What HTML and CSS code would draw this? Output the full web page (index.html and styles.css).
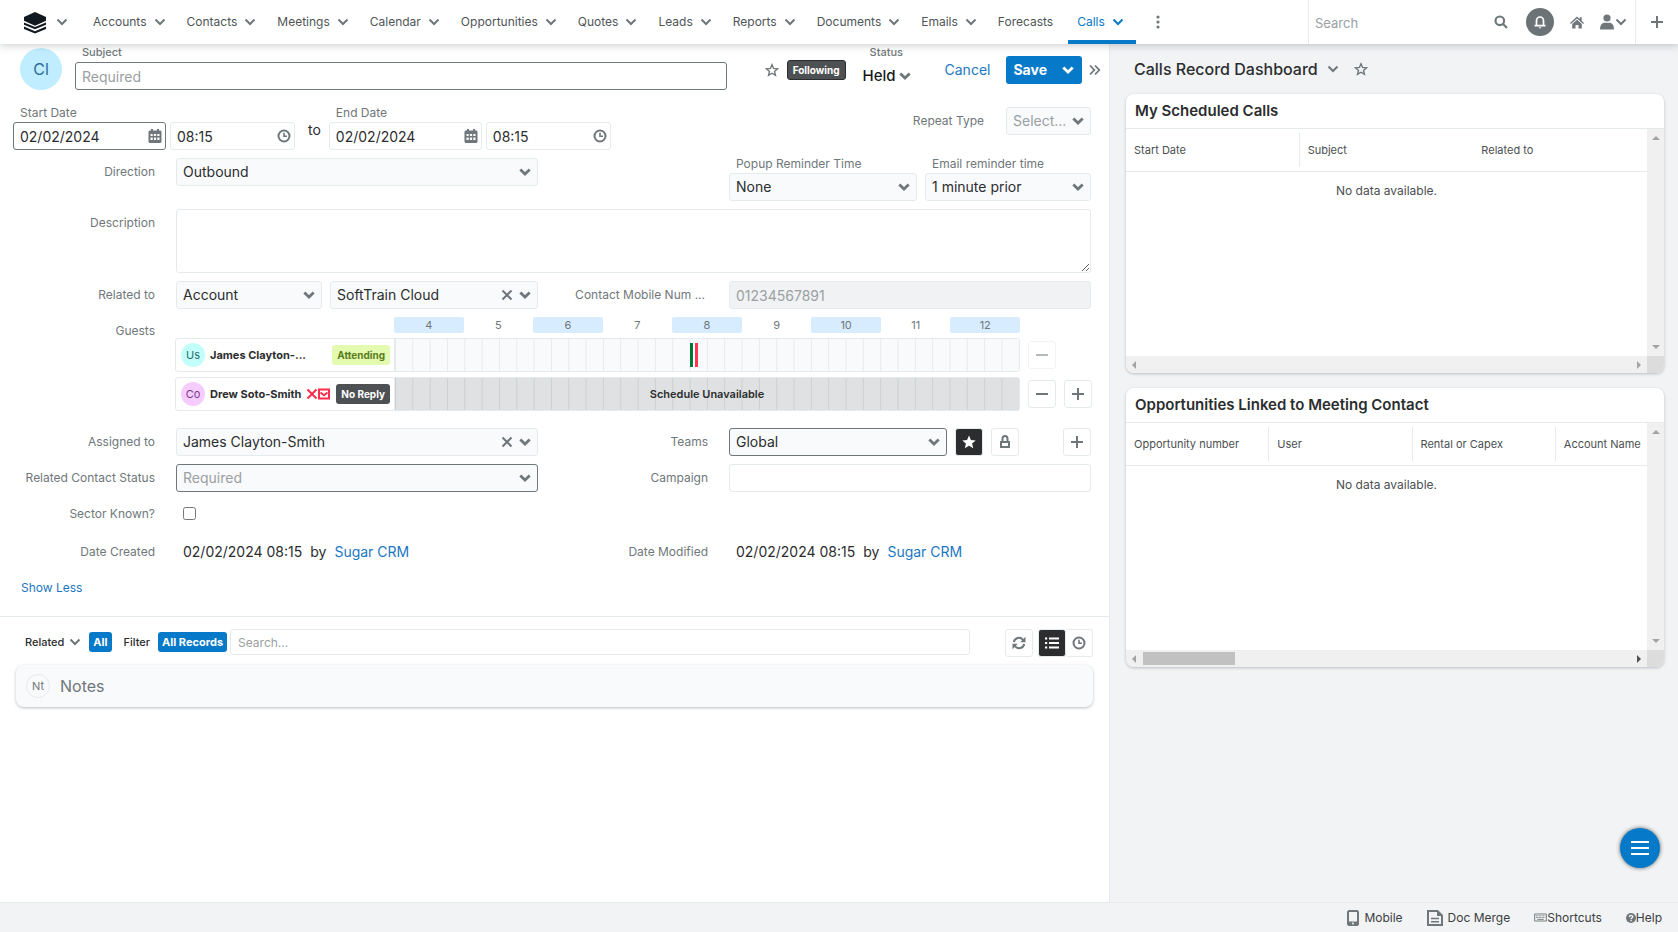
FILE: index.html
```html
<!DOCTYPE html>
<html lang="en">
<head>
  <meta charset="UTF-8">
  <meta name="viewport" content="width=device-width, initial-scale=1.0">
  <title>Calls</title>
  <link rel="stylesheet" href="styles.css">
</head>
<body>

<!-- icon sprite -->
<svg class="sprite" aria-hidden="true">
  <symbol id="i-down" viewBox="0 0 12 12"><path d="M1.5 3.5 6 8l4.500-4.500" fill="none" stroke="currentColor" stroke-width="2"/></symbol>
  <symbol id="i-down-bold" viewBox="0 0 12 12"><path d="M1.300 3.500 6 8l4.700-4.500" fill="none" stroke="currentColor" stroke-width="2.800"/></symbol>
  <symbol id="i-logo" viewBox="0 0 24 24"><path d="M12 1 24 6.500v4L12 16 0 10.500v-4z"/><path d="M0 12.500v2.500l12 5 12-5v-2.500l-12 5zM0 17v2.500l12 5 12-5V17l-12 5z"/></symbol>
  <symbol id="i-star" viewBox="0 0 24 24"><path d="m12 3 2.700 6.300 6.800.6-5.200 4.500 1.600 6.700L12 17.500l-5.900 3.600 1.600-6.700-5.200-4.500 6.800-.6z" fill="none" stroke="currentColor" stroke-width="2.400"/></symbol>
  <symbol id="i-star-full" viewBox="0 0 24 24"><path d="m12 1 3.300 7.500 8.200.8-6.200 5.400 1.900 8L12 18.400 4.800 22.700l1.900-8L.5 9.300l8.200-.8z"/></symbol>
  <symbol id="i-calendar" viewBox="0 0 14 14"><path fill-rule="evenodd" d="M3 0h2v1.500h4V0h2v1.500h1.500l1 1V13l-1 1h-11l-1-1V2.500l1-1H3zM2.500 5v2h2.200V5zm3.400 0v2h2.200V5zm3.400 0v2h2.200V5zM2.500 8.500v2.500h2.200V8.500zm3.400 0v2.500h2.200V8.500zm3.400 0v2.500h2.200V8.500z"/></symbol>
  <symbol id="i-clock" viewBox="0 0 14 14"><g fill="none" stroke="currentColor"><circle cx="7" cy="7" r="5.500" stroke-width="2"/><path d="M7 3.700v3.600h3" stroke-width="1.600"/></g></symbol>
  <symbol id="i-x" viewBox="0 0 12 12"><path d="m1.500 1.500 9 9m0-9-9 9" fill="none" stroke="currentColor" stroke-width="2"/></symbol>
  <symbol id="i-plus" viewBox="0 0 12 12"><path d="M6 0v12M0 6h12" fill="none" stroke="currentColor" stroke-width="2"/></symbol>
  <symbol id="i-minus" viewBox="0 0 12 12"><path d="M0 6h12" fill="none" stroke="currentColor" stroke-width="2"/></symbol>
  <symbol id="i-lock" viewBox="0 0 12 14"><g fill="none" stroke="currentColor" stroke-width="2"><path d="M2 7h8v5H2zM3.500 7V3.500a2.500 2.500 0 0 1 5 0V7"/></g></symbol>
  <symbol id="i-search" viewBox="0 0 14 14"><g fill="none" stroke="currentColor" stroke-width="2.200"><circle cx="5.800" cy="5.800" r="4.300"/><path d="m9 9 4 4"/></g></symbol>
  <symbol id="i-bell" viewBox="0 0 14 14"><path d="M3.500 10.500V5.500a3.500 3.500 0 0 1 7 0v5M1.500 10.700h11" fill="none" stroke="currentColor" stroke-width="1.700"/><path d="M5.500 12.200h3L7 13.700z"/></symbol>
  <symbol id="i-home" viewBox="0 0 14 14"><path d="M7 1.500 9.700 4V2.300h2v3.500L14 8l-.9 1L7 3.500.9 9 0 8z"/><path d="M2.200 9 7 4.700 11.800 9v4.500H8.500V10h-3v3.500H2.200z"/></symbol>
  <symbol id="i-user" viewBox="0 0 14 16"><circle cx="7" cy="4" r="3.600"/><path d="M0 15.500c0-4 1.500-6.200 4-6.700h6c2.500.5 4 2.700 4 6.700z"/></symbol>
  <symbol id="i-more" viewBox="0 0 4 14"><circle cx="2" cy="2" r="1.600"/><circle cx="2" cy="7" r="1.600"/><circle cx="2" cy="12" r="1.600"/></symbol>
  <symbol id="i-expand" viewBox="0 0 12 12"><path d="m1 1.500 4.300 4.500L1 10.500M6 1.500 10.300 6 6 10.500" fill="none" stroke="currentColor" stroke-width="1.800"/></symbol>
  <symbol id="i-mail" viewBox="0 0 12 11"><g fill="none" stroke="currentColor" stroke-width="2"><path d="M1 1h10v9H1z"/><path d="m2.500 4 3.500 2.700L9.500 4"/></g></symbol>
  <symbol id="i-refresh" viewBox="0 0 14 14"><path d="M1.800 6A5.200 5.200 0 0 1 11 3.800M12.200 8A5.200 5.200 0 0 1 3 10.200" fill="none" stroke="currentColor" stroke-width="2"/><path d="M13.500.8v5.400H8.200zM.5 13.200V7.800h5.300z"/></symbol>
  <symbol id="i-list" viewBox="0 0 14 12"><path d="M0 1.500h2.200M0 6h2.200M0 10.500h2.200M4 1.500h10M4 6h10M4 10.500h10" fill="none" stroke="currentColor" stroke-width="2"/></symbol>
  <symbol id="i-phone" viewBox="0 0 12 16"><path fill-rule="evenodd" d="M1.500 0h9L12 1.500v13L10.500 16h-9L0 14.500v-13zM2 2v9.500h8V2zm3.200 10.500v2h1.600v-2z"/></symbol>
  <symbol id="i-doc" viewBox="0 0 16 16"><path d="M1 1h9.500L15 5.500V15H1z" fill="none" stroke="currentColor" stroke-width="2"/><path d="M10 1v5h5z"/><path d="M4 8.500h8M4 11.700h8" stroke="currentColor" stroke-width="1.600"/></symbol>
  <symbol id="i-keyboard" viewBox="0 0 14 9"><path d="M.7.700h12.600v7.600H.7z" fill="none" stroke="currentColor"/><path d="M2 2.700h10M2 4.500h10" stroke="currentColor" stroke-dasharray="1 .6"/><path d="M3.500 6.500h7" stroke="currentColor"/></symbol>
  <symbol id="i-help" viewBox="0 0 10 10"><circle cx="5" cy="5" r="5"/><path d="M3.400 4c0-2.200 3.300-2.100 3.300-.2C6.700 5 5 5 5 6.200M5 7v1.300" fill="none" stroke="#f1f3f5" stroke-width="1.400"/></symbol>
</svg>

<header class="topbar">
  <button class="brand" type="button" aria-label="Modules">
    <svg class="logo"><use href="#i-logo"/></svg>
    <svg class="ico"><use href="#i-down"/></svg>
  </button>
  <nav class="nav">
    <a href="#accounts">Accounts <svg class="ico"><use href="#i-down"/></svg></a>
    <a href="#contacts">Contacts <svg class="ico"><use href="#i-down"/></svg></a>
    <a href="#meetings">Meetings <svg class="ico"><use href="#i-down"/></svg></a>
    <a href="#calendar">Calendar <svg class="ico"><use href="#i-down"/></svg></a>
    <a href="#opportunities">Opportunities <svg class="ico"><use href="#i-down"/></svg></a>
    <a href="#quotes">Quotes <svg class="ico"><use href="#i-down"/></svg></a>
    <a href="#leads">Leads <svg class="ico"><use href="#i-down"/></svg></a>
    <a href="#reports">Reports <svg class="ico"><use href="#i-down"/></svg></a>
    <a href="#documents">Documents <svg class="ico"><use href="#i-down"/></svg></a>
    <a href="#emails">Emails <svg class="ico"><use href="#i-down"/></svg></a>
    <a href="#forecasts" class="single">Forecasts</a>
    <a href="#calls" class="active">Calls <svg class="ico"><use href="#i-down"/></svg></a>
  </nav>
  <button class="more" type="button" aria-label="More modules"><svg><use href="#i-more"/></svg></button>
  <div class="tools">
    <input class="global-search" type="search" placeholder="Search" aria-label="Search">
    <button type="button" aria-label="Run search"><svg class="ico-m"><use href="#i-search"/></svg></button>
    <button class="bell" type="button" aria-label="Notifications"><svg class="ico-m"><use href="#i-bell"/></svg></button>
    <a href="#home" aria-label="Home"><svg class="ico-m"><use href="#i-home"/></svg></a>
    <button class="user" type="button" aria-label="User menu"><svg class="ico-user"><use href="#i-user"/></svg><svg class="ico"><use href="#i-down"/></svg></button>
    <button class="create" type="button" aria-label="Quick create"><svg class="ico"><use href="#i-plus"/></svg></button>
  </div>
</header>

<main class="layout">
  <section class="record">
    <div class="record-head">
      <span class="avatar">Cl</span>
      <div class="subject">
        <label for="subject">Subject</label>
        <input id="subject" class="field required" type="text" placeholder="Required">
      </div>
      <div class="follow">
        <button class="plain" type="button" aria-label="Favorite"><svg class="ico-m"><use href="#i-star"/></svg></button>
        <button class="badge dark outlined" type="button">Following</button>
      </div>
      <div class="status">
        <label for="status">Status</label>
        <div class="pick">
          <select id="status"><option>Held</option></select>
          <svg class="ico"><use href="#i-down-bold"/></svg>
        </div>
      </div>
      <div class="actions">
        <a href="#cancel" class="cancel">Cancel</a>
        <div class="save">
          <button type="button">Save</button>
          <button type="button" aria-label="Save options"><svg class="ico"><use href="#i-down-bold"/></svg></button>
        </div>
        <button class="plain" type="button" aria-label="Collapse dashboard"><svg class="ico"><use href="#i-expand"/></svg></button>
      </div>
    </div>

    <div class="dates">
      <div class="stack">
        <label for="start-date">Start Date</label>
        <div class="pair">
          <div class="pick date"><input id="start-date" class="field required" value="02/02/2024"><svg class="ico-m"><use href="#i-calendar"/></svg></div>
          <div class="pick time"><input class="field" value="08:15" aria-label="Start time"><svg class="ico-m"><use href="#i-clock"/></svg></div>
        </div>
      </div>
      <span class="to">to</span>
      <div class="stack">
        <label for="end-date">End Date</label>
        <div class="pair">
          <div class="pick date"><input id="end-date" class="field" value="02/02/2024"><svg class="ico-m"><use href="#i-calendar"/></svg></div>
          <div class="pick time"><input class="field" value="08:15" aria-label="End time"><svg class="ico-m"><use href="#i-clock"/></svg></div>
        </div>
      </div>
      <div class="repeat">
        <label for="repeat">Repeat Type</label>
        <div class="pick">
          <select id="repeat" class="field empty"><option>Select...</option></select>
          <svg class="ico"><use href="#i-down-bold"/></svg>
        </div>
      </div>
    </div>

    <div class="form">
      <label class="lbl" for="direction">Direction</label>
      <div class="pick top">
        <select id="direction" class="field"><option>Outbound</option></select>
        <svg class="ico"><use href="#i-down-bold"/></svg>
      </div>
      <div class="reminders">
        <div class="stack">
          <label for="popup">Popup Reminder Time</label>
          <div class="pick"><select id="popup" class="field"><option>None</option></select><svg class="ico"><use href="#i-down-bold"/></svg></div>
        </div>
        <div class="stack">
          <label for="email">Email reminder time</label>
          <div class="pick"><select id="email" class="field"><option>1 minute prior</option></select><svg class="ico"><use href="#i-down-bold"/></svg></div>
        </div>
      </div>

      <label class="lbl" for="description">Description</label>
      <textarea id="description" class="field wide"></textarea>

      <label class="lbl" for="related-type">Related to</label>
      <div class="related">
        <div class="pick"><select id="related-type" class="field"><option>Account</option></select><svg class="ico"><use href="#i-down-bold"/></svg></div>
        <div class="pick">
          <select class="field" aria-label="Related record"><option>SoftTrain Cloud</option></select>
          <span class="icons"><button class="plain" type="button" aria-label="Clear related record"><svg class="ico"><use href="#i-x"/></svg></button><svg class="ico"><use href="#i-down-bold"/></svg></span>
        </div>
      </div>
      <label class="lbl num" for="mobile">Contact Mobile Num ...</label>
      <input id="mobile" class="field" value="01234567891" disabled>

      <span class="lbl">Guests</span>
      <div class="guests wide">
        <div class="hours">
          <span>4</span><span>5</span><span>6</span><span>7</span><span>8</span><span>9</span><span>10</span><span>11</span><span>12</span>
        </div>
        <div class="guest">
          <div class="person">
            <span class="dot user-dot">Us</span>
            <b>James Clayton-...</b>
            <span class="badge green">Attending</span>
          </div>
          <div class="slots"><span class="call"></span></div>
        </div>
        <div class="guest-btns">
          <button class="btn" type="button" aria-label="Remove James" disabled><svg class="ico"><use href="#i-minus"/></svg></button>
        </div>
        <div class="guest">
          <div class="person">
            <span class="dot contact-dot">Co</span>
            <b>Drew Soto-Smith</b>
            <span class="no-mail"><svg class="ico"><use href="#i-x"/></svg><svg class="ico"><use href="#i-mail"/></svg></span>
            <span class="badge dark">No Reply</span>
          </div>
          <div class="slots unavailable">Schedule Unavailable</div>
        </div>
        <div class="guest-btns">
          <button class="btn" type="button" aria-label="Remove Drew"><svg class="ico"><use href="#i-minus"/></svg></button>
          <button class="btn" type="button" aria-label="Add guest"><svg class="ico"><use href="#i-plus"/></svg></button>
        </div>
      </div>

      <label class="lbl" for="assigned">Assigned to</label>
      <div class="pick">
        <select id="assigned" class="field"><option>James Clayton-Smith</option></select>
        <span class="icons"><button class="plain" type="button" aria-label="Clear assigned user"><svg class="ico"><use href="#i-x"/></svg></button><svg class="ico"><use href="#i-down-bold"/></svg></span>
      </div>
      <label class="lbl" for="teams">Teams</label>
      <div class="teams">
        <div class="pick"><select id="teams" class="field required"><option>Global</option></select><svg class="ico"><use href="#i-down-bold"/></svg></div>
        <button class="btn on" type="button" aria-label="Primary team"><svg class="ico-m"><use href="#i-star-full"/></svg></button>
        <button class="btn" type="button" aria-label="Lock team"><svg class="ico-m"><use href="#i-lock"/></svg></button>
        <button class="btn add" type="button" aria-label="Add team"><svg class="ico"><use href="#i-plus"/></svg></button>
      </div>

      <label class="lbl" for="contact-status">Related Contact Status</label>
      <div class="pick">
        <select id="contact-status" class="field required empty"><option>Required</option></select>
        <svg class="ico"><use href="#i-down-bold"/></svg>
      </div>
      <label class="lbl" for="campaign">Campaign</label>
      <input id="campaign" class="field" type="text">

      <label class="lbl" for="sector">Sector Known?</label>
      <div class="check wide"><input id="sector" type="checkbox"></div>

      <span class="lbl">Date Created</span>
      <div class="stamp"><span>02/02/2024 08:15</span> <span>by</span> <a href="#sugar">Sugar CRM</a></div>
      <span class="lbl">Date Modified</span>
      <div class="stamp"><span>02/02/2024 08:15</span> <span>by</span> <a href="#sugar">Sugar CRM</a></div>
    </div>
    <a class="less" href="#less">Show Less</a>

    <div class="filters">
      <button class="plain filter-name" type="button">Related <svg class="ico"><use href="#i-down"/></svg></button>
      <button class="badge blue" type="button">All</button>
      <span class="filter-name">Filter</span>
      <button class="badge blue records" type="button">All Records</button>
      <input class="field" type="search" placeholder="Search..." aria-label="Search related records">
      <button class="btn" type="button" aria-label="Refresh"><svg class="ico-m"><use href="#i-refresh"/></svg></button>
      <div class="toggle">
        <button class="btn on" type="button" aria-label="List view"><svg class="ico-m"><use href="#i-list"/></svg></button>
        <button class="btn" type="button" aria-label="Activity view"><svg class="ico-m"><use href="#i-clock"/></svg></button>
      </div>
    </div>
    <div class="notes"><span class="dot notes-dot">Nt</span>Notes</div>
  </section>

  <aside class="dash">
    <h1>Calls Record Dashboard <svg class="ico"><use href="#i-down"/></svg> <button class="plain" type="button" aria-label="Favorite dashboard"><svg class="ico-m"><use href="#i-star"/></svg></button></h1>

    <section class="card">
      <h2>My Scheduled Calls</h2>
      <div class="scroller">
        <div class="view">
          <table class="calls">
            <thead><tr><th>Start Date</th><th>Subject</th><th>Related to</th></tr></thead>
          </table>
          <p>No data available.</p>
        </div>
        <div class="vbar"><i class="up"></i><i class="dn"></i></div>
        <div class="hbar"><i class="lt"></i><i class="rt"></i></div>
        <div class="corner"></div>
      </div>
    </section>

    <section class="card">
      <h2>Opportunities Linked to Meeting Contact</h2>
      <div class="scroller">
        <div class="view">
          <table class="opps">
            <thead><tr><th>Opportunity number</th><th>User</th><th>Rental or Capex</th><th>Account Name</th></tr></thead>
          </table>
          <p>No data available.</p>
        </div>
        <div class="vbar"><i class="up"></i><i class="dn"></i></div>
        <div class="hbar"><i class="lt"></i><span class="thumb"></span><i class="rt can"></i></div>
        <div class="corner"></div>
      </div>
    </section>
  </aside>
</main>

<footer class="footer">
  <a href="#mobile-app" class="spaced"><svg class="ico-phone"><use href="#i-phone"/></svg>Mobile</a>
  <a href="#merge" class="spaced"><svg class="ico-doc"><use href="#i-doc"/></svg>Doc Merge</a>
  <a href="#shortcuts"><svg class="ico-key"><use href="#i-keyboard"/></svg>Shortcuts</a>
  <a href="#help"><svg class="ico-s"><use href="#i-help"/></svg>Help</a>
</footer>

<button class="fab" type="button" aria-label="Menu"><span></span><span></span><span></span></button>

</body>
</html>
```

FILE: styles.css
```css
:root{
  --blue:#0679c8;
  --link:#1c77c3;
  --text:#2b2d2e;
  --label:#6f777b;
  --line:#e5eaed;
  --page:#f1f3f5;
  --fill:#f9fafc;
}
*{box-sizing:border-box}
body{margin:0;min-height:100vh;display:flex;flex-direction:column;background:#fff;color:var(--text);font-family:Inter,"Liberation Sans",sans-serif;font-size:12px;line-height:16px}
button,input,select,textarea{font:inherit;color:inherit;margin:0}
button{padding:0;border:0;background:none;display:flex;align-items:center;justify-content:center;cursor:pointer}
a{color:var(--link);text-decoration:none}
svg{display:block;flex:none;fill:currentColor}
label{color:var(--label)}

.sprite{position:absolute;width:0;height:0}
.ico{width:12px;height:12px;color:var(--label)}
.ico-m{width:14px;height:14px;color:var(--label)}
.ico-s{width:10px;height:10px}
.plain{color:var(--label)}

/* top bar */
.topbar{position:relative;z-index:2;height:44px;display:flex;align-items:stretch;background:#fff;box-shadow:0 1px 8px rgba(60,70,80,.3)}
.brand{padding:0 16px 0 24px;gap:10px}
.logo{width:22px;height:24px;color:#10191f}
.nav{display:flex}
.nav a{display:flex;align-items:center;gap:7px;padding:0 12px 0 9px;color:#4f5557;border:solid transparent;border-width:4px 0}
.nav .single{padding-right:15px}
.nav .active{color:var(--blue);border-bottom-color:var(--blue)}
.nav .active .ico{color:var(--blue)}
.more{width:44px;color:var(--label)}
.more svg{width:4px;height:14px}
.tools{flex:1;max-width:370px;margin-left:auto;display:flex;align-items:center;border-left:1px solid var(--line)}
.global-search{flex:1;min-width:0;border:0;outline:0;padding:2px 6px 0;font-size:13px;background:none}
.bell{width:28px;height:28px;margin:0 16px 0 18px;border-radius:50%;background:#6b7377}
.bell .ico-m{color:#fff}
.user{margin:0 8px 0 16px;gap:1px;color:var(--label)}
.ico-user{width:14px;height:16px}
.create{align-self:stretch;width:43px;border-left:1px solid var(--line)}

/* record pane */
.layout{flex:1;display:grid;grid-template-columns:1110fr 568fr}
.record{min-width:0;border-right:1px solid var(--line)}
.record-head{display:flex;align-items:flex-start;padding:0 8px 0 20px}
.avatar{width:42px;height:42px;margin:4px 13px 0 0;border-radius:50%;background:#c0edff;color:#2b6f9b;display:grid;place-items:center;font-size:16px}
.subject{flex:1;max-width:652px;display:flex;flex-direction:column;gap:2px}
.subject label{padding-left:7px;font-size:11px;font-weight:500}
.field{width:100%;height:28px;padding:0 6px;border:1px solid var(--line);border-radius:3px;background:#fff;font-size:14px;outline:0}
select.field{background:var(--fill)}
.field.required{border-color:#6f777b}
.field.empty{color:#9aa0a3}
.field:disabled{background:#f0f2f3;color:#9aa0a3}
::placeholder{color:#9aa0a3;opacity:1}
select{appearance:none}
.pick{display:grid;align-items:center;min-width:0}
.pick>*{grid-area:1/1}
.pick>svg,.pick>.icons{justify-self:end;margin-right:7px;pointer-events:none}
.pick>.ico-m{margin-right:4px}
.pick .icons{display:flex;gap:6px;align-items:center}
.follow{display:flex;align-items:center;gap:8px;margin:16px 0 0 auto}
.badge{height:20px;padding:0 5px;border-radius:3px;font-size:10px;font-weight:700;line-height:20px;white-space:nowrap}
.dark{background:#4e5154;color:#fff}
.outlined{border:1px solid #2b2d2e}
.green{background:#e3fab0;color:#5a7d1c}
.blue{background:var(--blue);color:#fff;font-size:11px}
.status{margin:0 34px 0 17px;display:flex;flex-direction:column}
.status label{padding-left:7px;font-size:11px;font-weight:500}
.status .pick{width:48px;height:32px}
.status select{border:0;background:none;padding:0;font-size:15px;font-weight:500;color:#17191a}
.status .pick svg{margin:0}
.actions{display:flex;align-items:center;gap:16px;margin-top:12px}
.cancel{font-size:14px}
.save{display:flex;background:var(--blue);border-radius:3px;color:#fff;height:28px;margin-right:-9px}
.save button{font-size:14px;font-weight:700;padding:0 8px 0 7px}
.save .ico{color:#fff}

.dates{display:flex;align-items:flex-start;padding:13px 18px 0 13px}
.stack{display:flex;flex-direction:column;gap:1px;min-width:0}
.stack label{padding-left:7px}
.pair{display:flex;gap:4px}
.date{width:153px}
.time{width:125px}
.to{font-size:14px;padding:17px 8px 0 13px}
.repeat{margin:2px 0 0 auto;display:flex;align-items:center;gap:22px}
.repeat .pick{width:85px}

.form{display:grid;grid-template-columns:155px minmax(0,1fr) 149px minmax(0,1fr);gap:8px 21px;padding:8px 18px 0 0}
.lbl{line-height:28px;text-align:right;white-space:nowrap}
span.lbl{color:var(--label)}
.num{padding-right:3px}
.wide{grid-column:span 3}
.top{align-self:start}
.reminders{grid-column:4;display:grid;grid-template-columns:188fr 166fr;gap:8px}
.reminders .stack{margin-top:-2px}
textarea.field{height:64px;resize:vertical;display:block}
.related{display:grid;grid-template-columns:146fr 208fr;gap:8px}
.guests{display:grid;grid-template-columns:minmax(0,1fr) 64px;gap:5px 8px;margin:0 -1px 9px}
.hours{grid-column:1;display:grid;grid-template-columns:repeat(9,1fr);margin-left:219px;line-height:16px;font-size:11px;text-align:center;color:var(--label)}
.hours span:nth-child(odd){background:#d7edff;border-radius:2px}
.guest{grid-column:1;display:grid;grid-template-columns:218px 1fr;height:34px;border:1px solid var(--line);border-radius:3px}
.person{display:flex;align-items:center;gap:5px;padding:0 4px 0 5px;font-size:11px}
.person b{white-space:nowrap;font-weight:700}
.person .badge{margin-left:auto}
.dot{width:24px;height:24px;border-radius:50%;display:grid;place-items:center;font-size:11px;flex:none}
.user-dot{background:#c2fffb;color:#2b6b70}
.contact-dot{background:#f6ccff;color:#7a3a86}
.no-mail{display:flex;align-items:center;color:#ff2d4b}
.no-mail svg{color:inherit}
.slots{position:relative;border-left:1px solid var(--line);background:linear-gradient(90deg,var(--line) 1px,var(--fill) 1px) 0 0/calc(100%/36) 100%}
.call{position:absolute;left:calc(100%*17/36);top:4px;width:8px;height:24px;border:solid #007a3a;border-width:0 0 0 3px;background:#fff;box-shadow:inset -3px 0 #ff3850}
.unavailable{background:linear-gradient(90deg,#cdd0d2 1px,#dfe1e3 1px) 0 0/calc(100%/36) 100%;text-align:center;line-height:32px;font-size:11px;font-weight:600}
.guest-btns{display:flex;align-items:center;gap:8px}
.btn{width:28px;height:28px;flex:none;border:1px solid var(--line);border-radius:3px;background:#fff}
.btn:disabled{opacity:.5}
.btn.on{background:#2b2d2e}
.btn.on svg{color:#fff}
.teams{display:flex;gap:8px}
.teams .pick{flex:1}
.teams .add{margin-left:36px}
.check{height:28px;padding:7px}
.check input{display:block;width:13px;height:13px}
.stamp{font-size:14px;line-height:28px;padding:0 7px;display:flex;gap:8px}
.form>.lbl:nth-last-child(4),.form>.lbl:nth-last-child(2),.stamp{margin-top:2px}
.less{display:block;margin:14px 21px 20px}

.filters{display:flex;align-items:flex-start;padding:12px 16px 8px 25px;border-top:1px solid var(--line)}
.filter-name{display:flex;align-items:center;gap:5px;height:26px;margin-right:8px;font-size:11px;font-weight:500;color:var(--text)}
.filters .badge{margin:3px 12px 0 0;padding:0 4px}
.filters .records{margin-right:3px}
.filters .field{flex:1;height:26px;font-size:12px;padding:0 7px;margin-right:35px}
.filters>.btn{margin-right:5px}
.toggle{display:flex}
.toggle .btn+.btn{border-left:0;width:27px}
.notes{display:flex;align-items:center;gap:10px;height:42px;margin:0 16px;padding:0 10px;border-radius:8px;background:var(--fill);box-shadow:0 1px 3px rgba(60,70,80,.35);font-size:16px;color:var(--label)}
.notes-dot{border:1px solid var(--line)}

/* dashboard */
.dash{min-width:0;background:var(--page);padding:15px 14px 0 16px}
.dash h1{display:flex;align-items:center;gap:9px;margin:0 0 15px;padding-left:8px;font-size:16px;line-height:20px;font-weight:500}
.dash h1 .plain{margin-left:6px}
.card{height:279px;margin-bottom:15px;display:flex;flex-direction:column;border-radius:8px;background:#fff;overflow:hidden;box-shadow:0 1px 3px rgba(60,70,80,.3)}
.card h2{margin:0;padding:0 9px;font-size:15px;line-height:34px;font-weight:600;border-bottom:1px solid var(--line)}
.scroller{flex:1;display:grid;grid-template:minmax(0,1fr) 17px/minmax(0,1fr) 17px}
.view{overflow:hidden}
.view p{margin:11px 0;text-align:center;color:#4b4f51}
table{table-layout:fixed;border-collapse:collapse;width:100%;border-bottom:1px solid var(--line)}
.opps{width:110%}
th{height:42px;padding:4px 0 4px 8px;text-align:left;font-size:11px;font-weight:400;color:#4b4f51;white-space:nowrap;background:linear-gradient(var(--line),var(--line)) 100% 50%/1px 34px no-repeat}
th:last-child,.calls th:nth-child(2){background:none}
.vbar,.hbar{display:flex;justify-content:space-between;align-items:center;background:#f0f0f0}
.vbar{flex-direction:column;padding:7px 0}
.hbar{padding:0 6px}
.corner{background:#dcdcdc}
.scroller i{border:4px solid transparent}
.scroller .up{border-top:0;border-bottom-color:#a3a3a3}
.scroller .dn{border-bottom:0;border-top-color:#a3a3a3}
.scroller .lt{border-left:0;border-right-color:#a3a3a3}
.scroller .rt{border-right:0;border-left-color:#a3a3a3}
.scroller .can{border-left-color:#505050}
.thumb{width:18%;height:13px;margin:0 auto 0 7px;background:#c1c1c1}

/* footer */
.footer{display:flex;justify-content:flex-end;align-items:center;gap:24px;height:30px;padding:0 16px;background:#f1f3f5;border-top:1px solid var(--line)}
.footer a{display:flex;align-items:center;color:#3c4042}
.footer svg{color:var(--label)}
.footer .spaced{gap:5px}
.ico-phone{width:12px;height:16px}
.ico-doc{width:16px;height:16px}
.ico-key{width:13px;height:9px}
.fab{position:fixed;right:18px;bottom:64px;width:40px;height:40px;border-radius:50%;background:var(--blue);flex-direction:column;gap:4px;box-shadow:0 0 4px rgba(0,0,0,.6)}
.fab span{width:18px;height:2px;background:#fff}
```
